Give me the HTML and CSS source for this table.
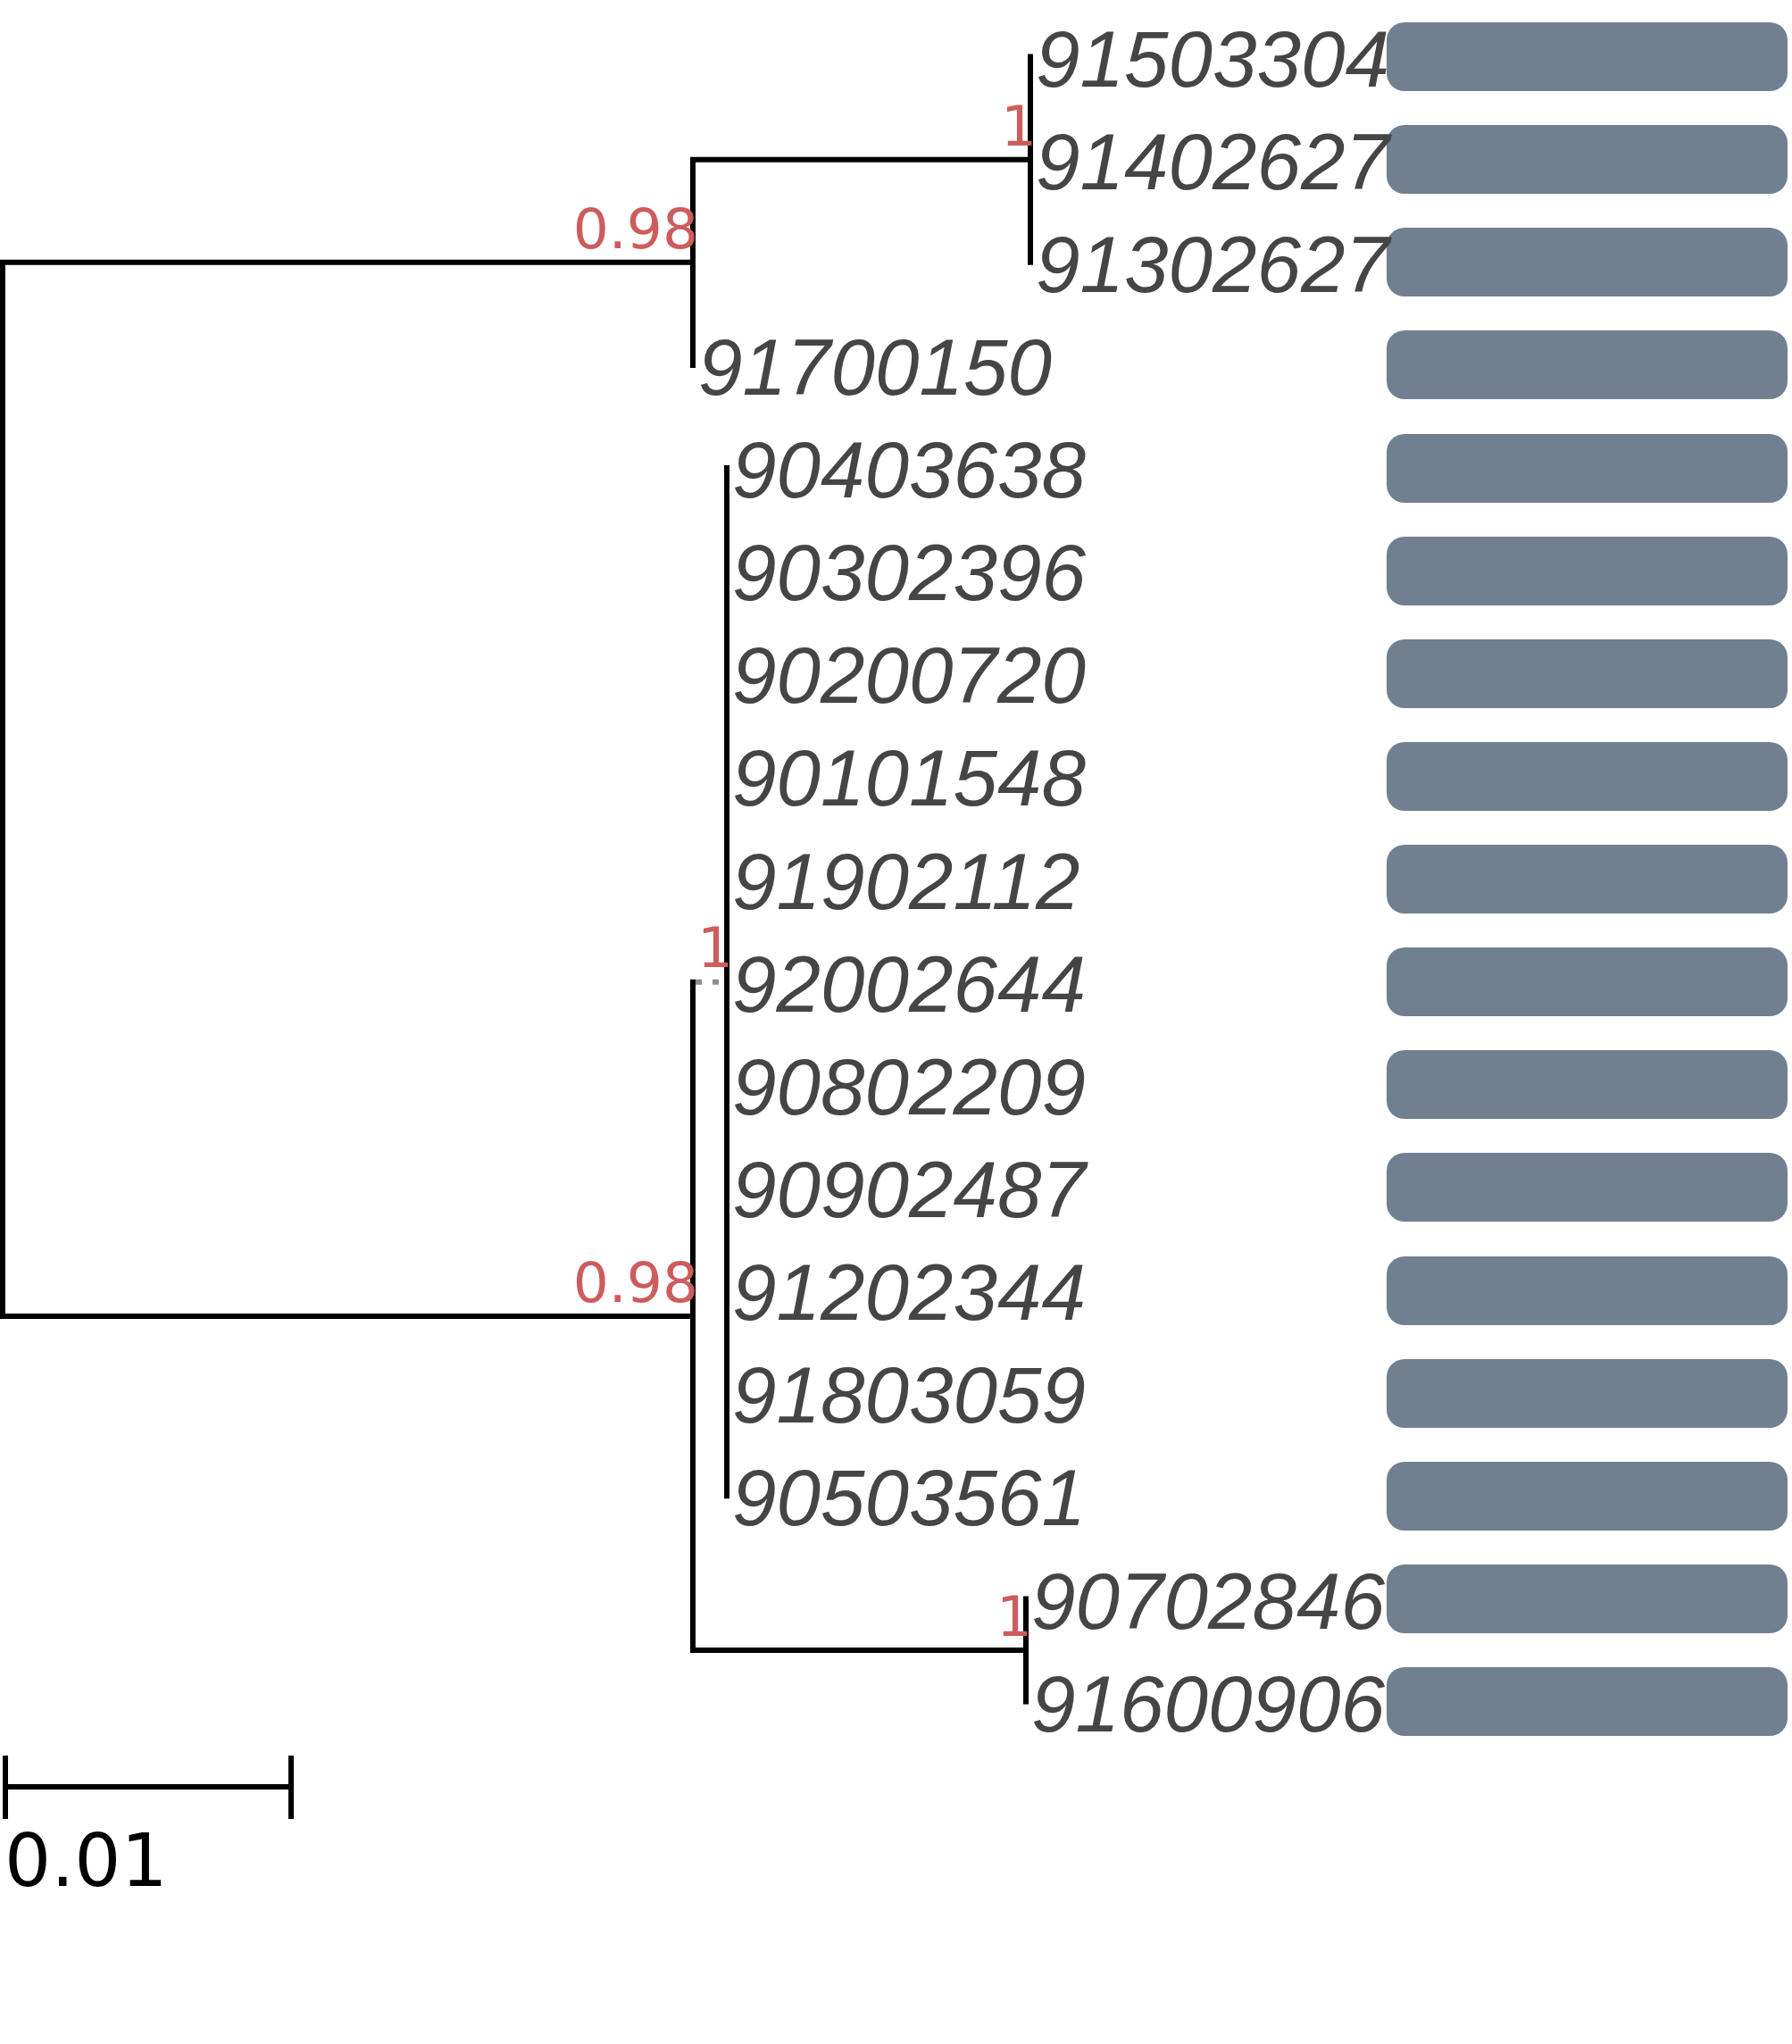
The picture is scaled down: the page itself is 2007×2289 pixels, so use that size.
FILE: index.html
```html
<!DOCTYPE html>
<html lang="en">
<head>
<meta charset="utf-8">
<title>Phylogenetic tree</title>
<link rel="stylesheet" href="styles.css">
</head>
<body>
<div class="figure">
  <div class="plot">
    <svg class="tree" width="1553" height="1944" viewBox="0 0 1553 1944" xmlns="http://www.w3.org/2000/svg">
      <!-- root -->
      <path class="branch" d="M3 293.8 V1473.9 M0 293.8 H776 M0 1473.9 H776"/>
      <!-- upper node B -->
      <path class="branch" d="M776 178.7 V408.9 M776 178.7 H1154"/>
      <!-- clade A -->
      <path class="branch" d="M1154 63.5 V293.8"/>
      <!-- lower node E -->
      <path class="branch" d="M776 1099.7 V1848 M776 1848 H1149"/>
      <path class="zero" d="M779 1099.7 H811"/>
      <!-- polytomy C -->
      <path class="branch" d="M814 524 V1675.3"/>
      <!-- clade D -->
      <path class="branch" d="M1149 1790.5 V1905.6"/>

      <text class="support" x="782" y="278">0.98</text>
      <text class="support" x="1161" y="163">1</text>
      <text class="support" x="821" y="1083">1</text>
      <text class="support" x="782" y="1458">0.98</text>
      <text class="support" x="1156" y="1832">1</text>

      <text class="leaf" x="1160" y="97">91503304</text>
      <text class="leaf" x="1160" y="212">91402627</text>
      <text class="leaf" x="1160" y="327">91302627</text>
      <text class="leaf" x="782" y="442">91700150</text>
      <text class="leaf" x="820" y="557">90403638</text>
      <text class="leaf" x="820" y="672">90302396</text>
      <text class="leaf" x="820" y="787">90200720</text>
      <text class="leaf" x="820" y="902">90101548</text>
      <text class="leaf" x="820" y="1018">91902112</text>
      <text class="leaf" x="820" y="1133">92002644</text>
      <text class="leaf" x="820" y="1248">90802209</text>
      <text class="leaf" x="820" y="1363">90902487</text>
      <text class="leaf" x="820" y="1478">91202344</text>
      <text class="leaf" x="820" y="1593">91803059</text>
      <text class="leaf" x="820" y="1708">90503561</text>
      <text class="leaf" x="1155" y="1824">90702846</text>
      <text class="leaf" x="1155" y="1939">91600906</text>
    </svg>
  </div>
  <div class="bars">
    <div class="bar"></div>
    <div class="bar"></div>
    <div class="bar"></div>
    <div class="bar"></div>
    <div class="bar"></div>
    <div class="bar"></div>
    <div class="bar"></div>
    <div class="bar"></div>
    <div class="bar"></div>
    <div class="bar"></div>
    <div class="bar"></div>
    <div class="bar"></div>
    <div class="bar"></div>
    <div class="bar"></div>
    <div class="bar"></div>
    <div class="bar"></div>
    <div class="bar"></div>
  </div>
</div>
<div class="scale">
  <svg class="scale-svg" width="400" height="200" viewBox="0 0 400 200" xmlns="http://www.w3.org/2000/svg">
    <path class="scale-line" d="M6 22 V93 M326 22 V93 M6 57 H326"/>
    <text class="scale-label" x="5" y="168">0.01</text>
  </svg>
</div>
</body>
</html>
```

FILE: styles.css
```css
html, body {
  margin: 0;
  padding: 0;
  background: #ffffff;
}

body {
  width: 2007px;
  font-family: "DejaVu Sans", sans-serif;
}

.figure {
  display: flex;
  flex-direction: row;
  align-items: flex-start;
}

.plot {
  width: 1553px;
  flex: none;
  position: relative;
  z-index: 1;
}

.tree {
  display: block;
  overflow: visible;
}

.branch {
  fill: none;
  stroke: #000000;
  stroke-width: 6;
  stroke-linecap: square;
}

.zero {
  fill: none;
  stroke: #8c8c8c;
  stroke-width: 6;
  stroke-dasharray: 7 12;
}

.support {
  font-family: "DejaVu Sans", sans-serif;
  font-size: 63px;
  fill: #cd5c5c;
  text-anchor: end;
}

.leaf {
  font-family: "Liberation Sans", Arial, sans-serif;
  font-style: italic;
  font-size: 89px;
  fill: #454545;
}

.bars {
  display: flex;
  flex-direction: column;
  gap: 38.13px;
  padding-top: 25px;
  width: 449px;
  flex: none;
}

.bar {
  height: 77px;
  border-radius: 20px;
  background: #708090;
}

.scale {
  display: block;
  padding-left: 0;
}

.scale-svg {
  display: block;
  overflow: visible;
}

.scale-line {
  fill: none;
  stroke: #000000;
  stroke-width: 6;
}

.scale-label {
  font-family: "DejaVu Sans", sans-serif;
  font-size: 82px;
  fill: #000000;
}
```
